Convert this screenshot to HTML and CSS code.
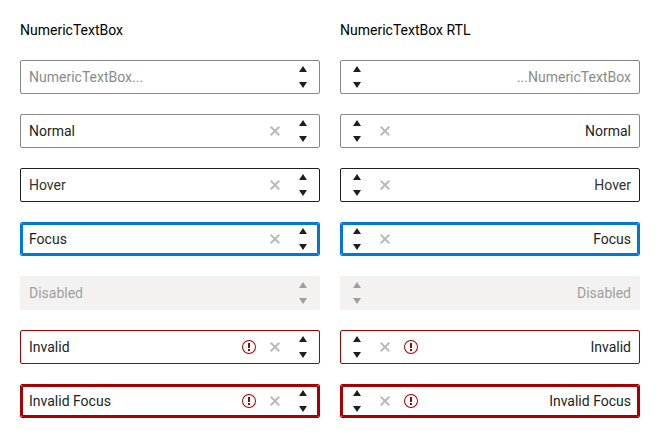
FILE: index.html
```html
<!DOCTYPE html>
<html lang="en">
<head>
<meta charset="utf-8">
<title>NumericTextBox</title>
<link rel="stylesheet" href="styles.css">
</head>
<body>
<svg class="defs" width="0" height="0">
<symbol id="up" viewBox="0 0 8 6"><path d="M4 0L8 6H0z"/></symbol>
<symbol id="down" viewBox="0 0 8 6"><path d="M4 6L0 0H8z"/></symbol>
<symbol id="clear" viewBox="0 0 16 16"><path d="M13 4.4L11.6 3 8 6.6 4.4 3 3 4.4 6.6 8 3 11.6 4.4 13 8 9.4l3.6 3.6 1.4-1.4L9.4 8z"/></symbol>
<symbol id="warn" viewBox="0 0 16 16"><path fill-rule="evenodd" d="M8 1a7 7 0 1 0 0 14A7 7 0 0 0 8 1zm0 13A6 6 0 1 1 8 2a6 6 0 0 1 0 12zM7 4h2v5H7zM7 10h2v2H7z"/></symbol>
</svg>
<main class="grid" id="grid"></main>
<script src="script.js"></script>
</body>
</html>
```

FILE: styles.css
```css
* { box-sizing: border-box; }
body {
  margin: 0;
  padding: 20px;
  background: #fff;
  color: #000;
  font: 14px/20px Roboto, sans-serif;
}
.defs { position: absolute; }
.grid {
  display: grid;
  grid-template-columns: 300px 300px;
  gap: 20px;
}
.title { height: 20px; }
.box {
  position: relative;
  display: flex;
  align-items: center;
  height: 34px;
  padding-left: 8px;
  border: 1px solid #8a8886;
  border-radius: 2px;
  color: #201f1e;
}
.box[dir="rtl"] { padding: 0 8px 0 0; }
.value { flex: 1; }
.placeholder .value { color: #8c8b89; }
.icon { width: 16px; height: 16px; margin-inline-end: 10px; fill: currentColor; }
.clear { color: #bbbaba; margin-inline-end: 4px; }
.warn { color: #a80000; }
.spin {
  display: flex;
  flex-direction: column;
  align-items: center;
  gap: 10px;
  width: 32px;
}
.spin svg { width: 8px; height: 6px; fill: currentColor; }
.hover { border-color: #201f1e; }
.hover .value { color: #323130; }
.focus { border-color: #0078d4; }
.disabled { border-color: #f3f2f1; background: #f3f2f1; color: #a19f9d; }
.invalid,
.invalid-focus { border-color: #a80000; }
.focus::after,
.invalid-focus::after {
  content: "";
  position: absolute;
  inset: 0;
  border: 2px solid #0078d4;
  border-radius: 2px;
}
.invalid-focus::after { border-color: #a80000; }
```

FILE: script.js
```js
const rows = [
  ['NumericTextBox...', 'placeholder', ''],
  ['Normal', 'normal', 'c'],
  ['Hover', 'hover', 'c'],
  ['Focus', 'focus', 'c'],
  ['Disabled', 'disabled', ''],
  ['Invalid', 'invalid', 'wc'],
  ['Invalid Focus', 'invalid-focus', 'wc']
];
const icon = (name, cls) => `<svg class="${cls}"><use href="#${name}"/></svg>`;
const box = ([text, state, icons], dir) => `<div class="box ${state}" dir="${dir}">
  <span class="value">${text}</span>
  ${icons.includes('w') ? icon('warn', 'icon warn') : ''}
  ${icons.includes('c') ? icon('clear', 'icon clear') : ''}
  <span class="spin">${icon('up', '')}${icon('down', '')}</span>
</div>`;
document.getElementById('grid').innerHTML =
  '<div class="title">NumericTextBox</div><div class="title">NumericTextBox RTL</div>' +
  rows.map(row => box(row, 'ltr') + box(row, 'rtl')).join('');
```
